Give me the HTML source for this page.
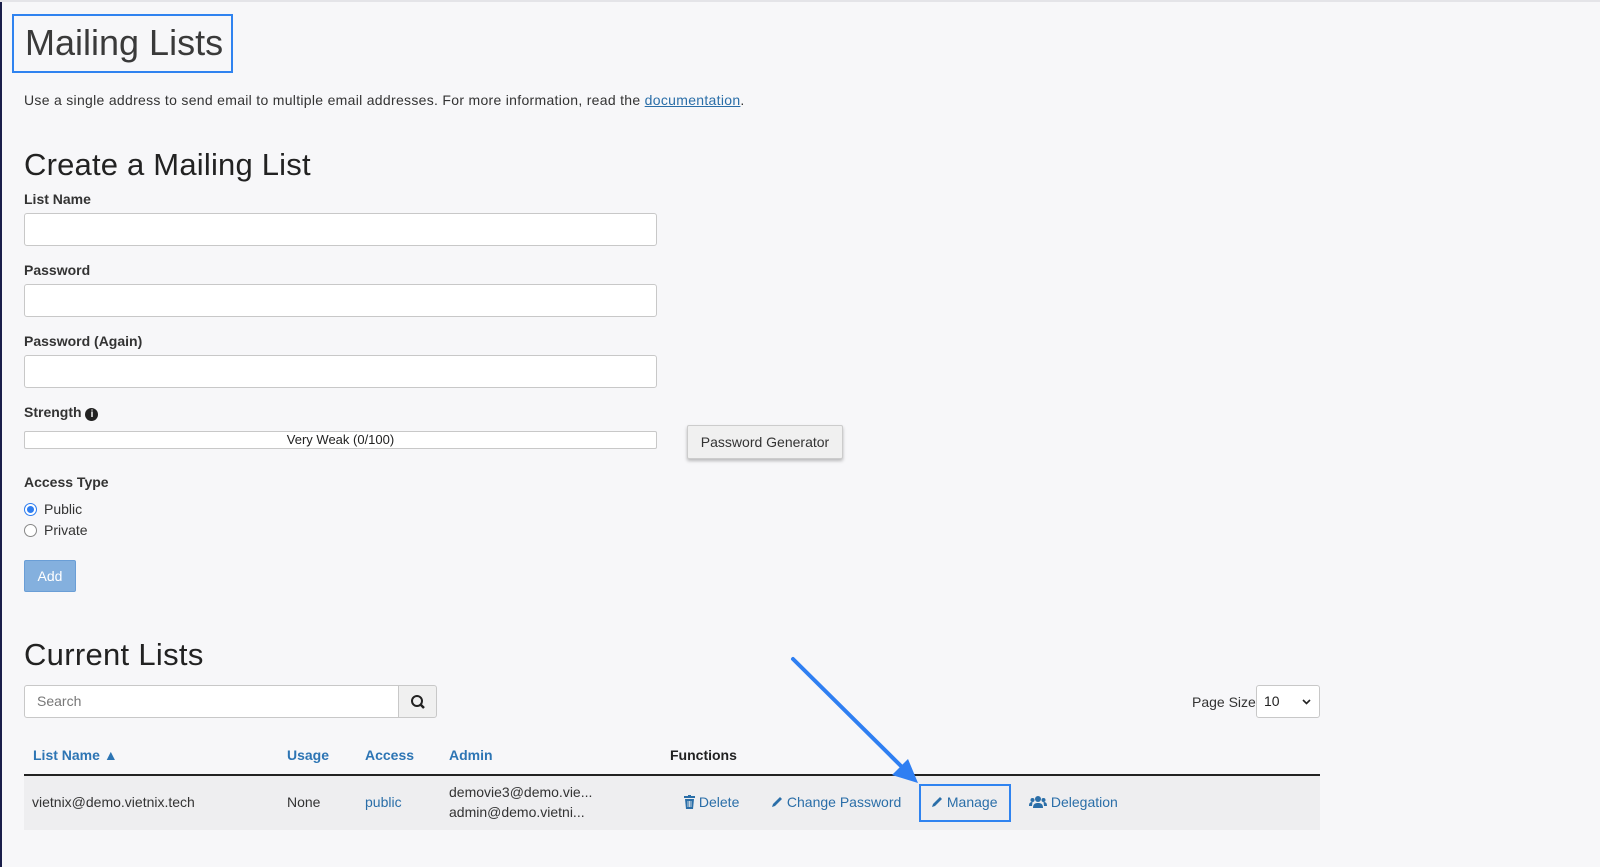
<!DOCTYPE html>
<html><head><meta charset="utf-8"><style>
*{box-sizing:border-box;margin:0;padding:0}
body{width:1600px;height:867px;background:#f7f7f9;font-family:"Liberation Sans",sans-serif;color:#222;position:relative;overflow:hidden;font-size:14px}
.a{position:absolute;white-space:nowrap}
.inp{position:absolute;background:#fff;border:1px solid #c8c8c8;border-radius:3px}
.lbl{font-weight:bold;font-size:14px;color:#333}
.lnk{color:#2a6ea8}
.th{font-weight:bold;color:#2d75b4;font-size:14px}
</style></head><body>
<div class="a" style="left:0;top:0;width:2px;height:867px;background:#1a1e4a"></div>
<div class="a" style="left:0;top:0;width:1600px;height:2px;background:#e4e4e8"></div>
<div class="a" style="left:12px;top:14px;width:221px;height:59px;border:2px solid #2f83f0"></div>
<div class="a" style="left:25px;top:22px;font-size:36px;color:#3a3a3a;font-weight:300">Mailing Lists</div>
<div class="a" style="left:24px;top:92px;font-size:14px;color:#333;letter-spacing:0.3px">Use a single address to send email to multiple email addresses. For more information, read the <span class="lnk" style="text-decoration:underline">documentation</span>.</div>
<div class="a" style="left:24px;top:147px;font-size:31px;color:#222;letter-spacing:0.2px">Create a Mailing List</div>
<div class="a lbl" style="left:24px;top:191px">List Name</div>
<div class="inp" style="left:24px;top:213px;width:633px;height:33px"></div>
<div class="a lbl" style="left:24px;top:262px">Password</div>
<div class="inp" style="left:24px;top:284px;width:633px;height:33px"></div>
<div class="a lbl" style="left:24px;top:333px">Password (Again)</div>
<div class="inp" style="left:24px;top:355px;width:633px;height:33px"></div>
<div class="a lbl" style="left:24px;top:404px">Strength <span style="display:inline-block;width:13px;height:13px;border-radius:50%;background:#222;color:#fff;font-size:10px;text-align:center;line-height:13px;vertical-align:0px">i</span></div>
<div class="inp" style="left:24px;top:431px;width:633px;height:18px;border-radius:2px;text-align:center;font-size:13px;line-height:16px;color:#222">Very Weak (0/100)</div>
<div class="a" style="left:687px;top:425px;width:156px;height:34px;background:#f0f0f0;border:1px solid #ccc;border-radius:2px;box-shadow:0 2px 3px rgba(0,0,0,.25);text-align:center;line-height:32px;font-size:14px;color:#333">Password Generator</div>
<div class="a lbl" style="left:24px;top:474px">Access Type</div>
<div class="a" style="left:24px;top:503px;width:13px;height:13px;border-radius:50%;border:1px solid #2f7ef0;background:#fff"><div style="margin:2px;width:7px;height:7px;border-radius:50%;background:#2f7ef0"></div></div>
<div class="a" style="left:44px;top:501px;color:#333">Public</div>
<div class="a" style="left:24px;top:524px;width:13px;height:13px;border-radius:50%;border:1px solid #888;background:#fff"></div>
<div class="a" style="left:44px;top:522px;color:#333">Private</div>
<div class="a" style="left:24px;top:560px;width:52px;height:32px;background:#84b0de;border:1px solid #6a9ed6;color:#fff;text-align:center;line-height:30px;font-size:14px;border-radius:2px">Add</div>
<div class="a" style="left:24px;top:637px;font-size:31px;color:#222;letter-spacing:0.3px">Current Lists</div>
<div class="inp" style="left:24px;top:685px;width:375px;height:33px;border-radius:3px 0 0 3px;color:#777;padding-left:12px;line-height:31px">Search</div>
<div class="a" style="left:398px;top:685px;width:39px;height:33px;background:#f0f0f0;border:1px solid #c8c8c8;border-radius:0 3px 3px 0">
<svg width="39" height="33" viewBox="0 0 39 33"><circle cx="18" cy="15" r="5" fill="none" stroke="#222" stroke-width="2"/><line x1="21.5" y1="18.5" x2="25" y2="22" stroke="#222" stroke-width="2.5"/></svg></div>
<div class="a" style="left:1192px;top:694px;color:#333">Page Size</div>
<div class="inp" style="left:1256px;top:685px;width:64px;height:33px;padding-left:7px;line-height:31px;color:#222">10<svg style="position:absolute;right:8px;top:13px" width="9" height="6"><path d="M1 1l3.5 3.5L8 1" fill="none" stroke="#222" stroke-width="1.6"/></svg></div>
<div class="a th" style="left:33px;top:747px">List Name <span style="font-size:14px">&#9650;</span></div>
<div class="a th" style="left:287px;top:747px">Usage</div>
<div class="a th" style="left:365px;top:747px">Access</div>
<div class="a th" style="left:449px;top:747px">Admin</div>
<div class="a" style="left:670px;top:747px;font-weight:bold;color:#222">Functions</div>
<div class="a" style="left:24px;top:774px;width:1296px;height:2px;background:#222"></div>
<div class="a" style="left:24px;top:776px;width:1296px;height:54px;background:#eeeef0"></div>
<div class="a" style="left:32px;top:794px;color:#333">vietnix@demo.vietnix.tech</div>
<div class="a" style="left:287px;top:794px;color:#333">None</div>
<div class="a lnk" style="left:365px;top:794px">public</div>
<div class="a" style="left:449px;top:784px;color:#333">demovie3@demo.vie...</div>
<div class="a" style="left:449px;top:804px;color:#333">admin@demo.vietni...</div>
<div class="a lnk" style="left:684px;top:794px"><svg width="11" height="14" viewBox="0 0 11 14" style="vertical-align:-2px"><rect x="0" y="1" width="11" height="2" fill="#2a6ea8"/><rect x="4" y="0" width="3" height="2" fill="#2a6ea8"/><path d="M1 4h9l-1 10H2z" fill="#2a6ea8"/><path d="M4 6v6M5.5 6v6M7 6v6" stroke="#eee" stroke-width=".8"/></svg> Delete</div>
<div class="a lnk" style="left:771px;top:794px"><svg width="12" height="12" viewBox="0 0 12 12" style="vertical-align:-1px"><path d="M1 11l1-3 7-7 2 2-7 7z" fill="#2a6ea8"/></svg> Change Password</div>
<div class="a" style="left:919px;top:784px;width:92px;height:38px;border:2px solid #2f83f0"></div>
<div class="a lnk" style="left:931px;top:794px"><svg width="12" height="12" viewBox="0 0 12 12" style="vertical-align:-1px"><path d="M1 11l1-3 7-7 2 2-7 7z" fill="#2a6ea8"/></svg> Manage</div>
<div class="a lnk" style="left:1029px;top:794px"><svg width="18" height="13" viewBox="0 0 18 13" style="vertical-align:-1px"><circle cx="9" cy="4" r="3" fill="#2a6ea8"/><path d="M4 13c0-4 2-5 5-5s5 1 5 5z" fill="#2a6ea8"/><circle cx="3.5" cy="5" r="2" fill="#2a6ea8"/><circle cx="14.5" cy="5" r="2" fill="#2a6ea8"/><path d="M0 11c0-3 1-4 3.5-4L3 11zM18 11c0-3-1-4-3.5-4l.5 4z" fill="#2a6ea8"/></svg> Delegation</div>
<svg class="a" style="left:0;top:0" width="1600" height="867"><line x1="793" y1="659" x2="903" y2="768" stroke="#2f7ff2" stroke-width="4" stroke-linecap="round"/><path d="M918 783l-26-8 16-16z" fill="#2f7ff2"/></svg>
</body></html>
